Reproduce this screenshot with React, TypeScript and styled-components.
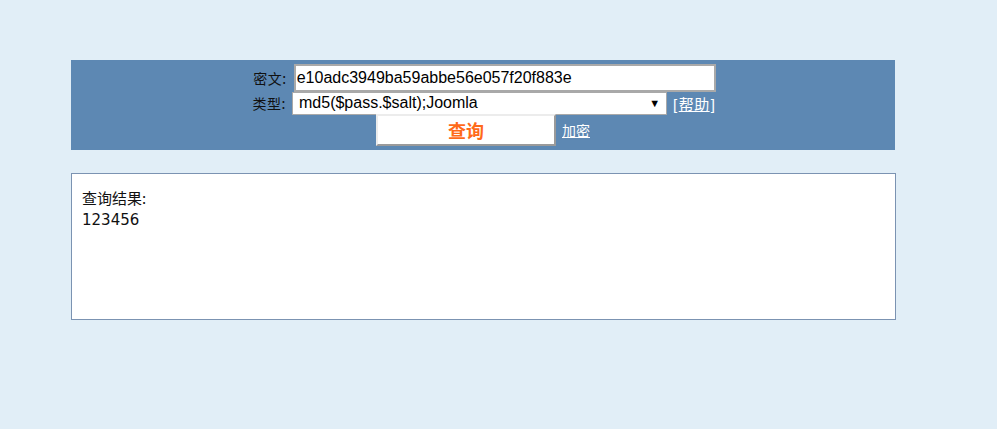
import React from "react";
import styled, { createGlobalStyle } from "styled-components";

const Global = createGlobalStyle`
  html, body { margin: 0; padding: 0; background: #e1eef7; }
  body { font-family: "Microsoft YaHei", "Noto Sans CJK SC", sans-serif; font-size: 14px; color: #111; }
`;

const Page = styled.div`
  padding: 60px 0 0 71px;
`;

const Panel = styled.form`
  width: 824px;
  height: 90px;
  box-sizing: border-box;
  padding-top: 3px;
  background: #5d88b3;
  display: flex;
  flex-direction: column;
  align-items: center;
`;

const Line = styled.div<{ $h: number; $gap: number; $shift?: number }>`
  height: ${(p) => p.$h}px;
  display: flex;
  align-items: center;
  justify-content: center;
  gap: ${(p) => p.$gap}px;
  margin-left: ${(p) => p.$shift ?? 0}px;
`;

const Label = styled.span`
  font-size: 14px;
  letter-spacing: 0.5px;
  color: #111;
  font-family: "Noto Sans CJK SC", sans-serif;
  margin-right: 2px;
`;

const TextInput = styled.input`
  width: 422px;
  height: 28px;
  box-sizing: border-box;
  border: 2px solid #a9a9a9;
  padding: 0 1px;
  font-family: "Liberation Sans", Arial, sans-serif;
  font-size: 16px;
  color: #000;
  background: #fff;
  outline: none;
`;

const Select = styled.div`
  width: 375px;
  height: 23px;
  box-sizing: border-box;
  border: 1px solid #a9a9a9;
  background: #fff;
  display: flex;
  align-items: center;
  justify-content: space-between;
  padding: 0 6px 0 6px;
  font-family: "Liberation Sans", Arial, sans-serif;
  font-size: 16px;
  color: #000;
`;

const Arrow = styled.span`
  font-size: 11px;
  color: #000;
`;

const Help = styled.span`
  color: #fff;
  font-size: 15px;
  font-family: "Liberation Sans", "Noto Sans CJK SC", sans-serif;
  margin-left: 2px;
  letter-spacing: 0.5px;
`;

const Link = styled.a<{ $size?: number }>`
  color: #fff;
  text-decoration: underline;
  font-family: "Noto Sans CJK SC", sans-serif;
  font-size: ${(p) => p.$size ?? 14}px;
  cursor: pointer;
  margin: 0 1px;
`;

const Button = styled.button`
  width: 180px;
  height: 32px;
  box-sizing: border-box;
  background: #fff;
  border: 2px solid;
  border-color: #ececec #9a9a9a #9a9a9a #ececec;
  color: #ff6a1a;
  font-weight: bold;
  font-size: 18px;
  font-family: "Noto Sans CJK SC", sans-serif;
  padding: 0;
`;

const Result = styled.div`
  margin-top: 23px;
  width: 825px;
  height: 147px;
  box-sizing: border-box;
  border: 1px solid #7b93b2;
  background: #fff;
  padding: 12px 10px;
`;

const ResultTitle = styled.div`
  font-size: 15px;
  line-height: 24px;
  color: #111;
  font-family: "Noto Sans CJK SC", sans-serif;
`;

const ResultValue = styled.div`
  font-family: "DejaVu Sans", Verdana, sans-serif;
  font-size: 15px;
  line-height: 20px;
  color: #111;
`;

export default function App() {
  return (
    <>
      <Global />
      <Page>
        <Panel onSubmit={(e) => e.preventDefault()}>
          <Line $h={29} $gap={5} $shift={3}>
            <Label>密文:</Label>
            <TextInput defaultValue="e10adc3949ba59abbe56e057f20f883e" />
          </Line>
          <Line $h={22} $gap={4} $shift={2}>
            <Label>类型:</Label>
            <Select>
              <span>md5($pass.$salt);Joomla</span>
              <Arrow>▼</Arrow>
            </Select>
            <Help>
              [<Link $size={15}>帮助</Link>]
            </Help>
          </Line>
          <Line $h={32} $gap={5} $shift={1}>
            <Button type="submit">查询</Button>
            <Link>加密</Link>
          </Line>
        </Panel>
        <Result>
          <ResultTitle>查询结果:</ResultTitle>
          <ResultValue>123456</ResultValue>
        </Result>
      </Page>
    </>
  );
}
